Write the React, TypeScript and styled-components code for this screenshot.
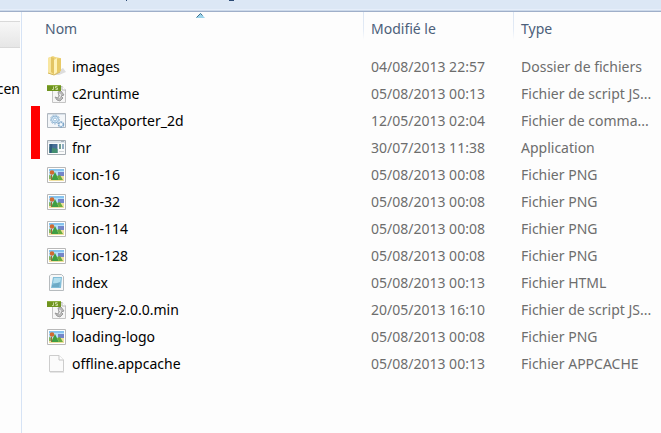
import React from "react";
import styled, { createGlobalStyle } from "styled-components";

const GlobalStyle = createGlobalStyle`
  * { box-sizing: border-box; }
  body { margin: 0; background: #fdfdfd; font-family: "Noto Sans", "Open Sans", sans-serif; font-size: 14px; overflow: hidden; }
`;

const Window = styled.div`
  display: flex;
  flex-direction: column;
  min-height: 100vh;
`;

const CommandBar = styled.header`
  height: 12px;
  flex: none;
  background: linear-gradient(#dce7f5 0 9px, #e6eefa 9px 10px, #ccd9ea 10px 11px, #9fafc9 11px);
  svg { display: block; }
`;

const Body = styled.div`
  display: flex;
  flex: 1;
`;

const Sidebar = styled.nav`
  width: 22px;
  flex: none;
  padding-top: 9px;
  border-right: 1px solid #d6e3f5;
  overflow: hidden;
`;

const SidebarHeading = styled.div`
  height: 27px;
  margin-right: 1px;
  border: 1px solid #d9d9d9;
  border-left: 0;
  border-right: 0;
  background: linear-gradient(#f7f7f7, #e6e6e6);
`;

const SidebarLink = styled.a`
  display: flex;
  justify-content: flex-end;
  margin-top: 31px;
  padding-right: 1px;
  line-height: 20px;
  color: #000;
  text-decoration: none;
`;

const Content = styled.main`
  position: relative;
  flex: 1;
  min-width: 0;
`;

const SortMark = styled.svg`
  position: absolute;
  top: 1px;
  left: 174px;
`;

const RedMark = styled.div`
  position: absolute;
  top: 94px;
  left: 9px;
  width: 9px;
  height: 53px;
  background: #f00;
`;

const FileTable = styled.table`
  width: 100%;
  table-layout: fixed;
  border-collapse: collapse;
`;

const Column = styled.col<{ $width?: number }>`
  width: ${(p) => (p.$width ? `${p.$width}px` : "auto")};
`;

const HeadCell = styled.th<{ $first?: boolean }>`
  height: 41px;
  padding: 7px 0 0 ${(p) => (p.$first ? 23 : 8)}px;
  vertical-align: top;
  text-align: left;
  font-weight: 400;
  line-height: 20px;
  color: #4c607a;
  background: ${(p) => (p.$first ? "none" : "linear-gradient(#dce6f3, #e2eaf5 60%, #fdfdfd) 0 0 / 1px 28px no-repeat")};
`;

const Cell = styled.td`
  height: 27px;
  padding: 0 0 0 8px;
  line-height: 20px;
  white-space: nowrap;
  overflow: hidden;
  color: #6d6d6d;
`;

const NameCell = styled(Cell)`
  padding-left: 25px;
  color: #000;
`;

const FileName = styled.div`
  display: flex;
  align-items: center;
  gap: 5px;
`;

const IconSvg = styled.svg`
  flex: none;
  display: block;
`;

type Kind = "folder" | "js" | "cmd" | "app" | "png" | "html" | "blank";

const glyphs: Record<Kind, React.ReactNode> = {
  folder: (
    <>
      <path d="M11 14l5-3 3 4-7 3h-4z" fill="#cfcfcf" opacity=".7" />
      <path d="M1 1l5-2 2 1 5 1v13l-6 4-6-2z" fill="#efd57c" />
      <path d="M1 1l3-1v15l3 3-6-2z" fill="#f8e6a0" />
      <path d="M4 0l3 1v16l-3-2z" fill="#e3c463" />
      <path d="M7 3l3-2v14l-3 3z" fill="#fff2b8" />
      <path d="M10 2l4-1v13l-4 2z" fill="#e8ca66" />
      <path d="M1 16l6 2 6-3" fill="none" stroke="#d4b75d" />
    </>
  ),
  js: (
    <>
      <path d="M5.500 2.500H15l3.500 3.500V18.500H5.500Z" fill="#f6f6f6" stroke="#c4c4c4" />
      <path d="M15 2v4h4" fill="#fff" stroke="#b8b8b8" />
      <path d="M11 8l3-1 3 4-3 1 2 2-3 3-3-1-2-3 3 1 1-2z" fill="#b9b9b9" stroke="#9c9c9c" />
      <path d="M12 10l2 1-2 3" fill="none" stroke="#f2f2f2" />
      <path d="M0 1h14v6H0z" fill="#6f9420" />
      <path d="M0 1h14v1H0z" fill="#8daf3d" />
      <path d="M6.500 2.500v3H5M10.500 2.500h-2v1.500h2v1.500h-2" fill="none" stroke="#dce8b8" strokeWidth=".8" />
    </>
  ),
  cmd: (
    <>
      <path d="M.5 2.500h18v14H.5z" fill="#f3f6f9" stroke="#b1b8c0" />
      <path d="M1 3h17v1H1z" fill="#d8e0e8" />
      <circle cx="8" cy="8.500" r="4.500" fill="none" stroke="#9bbbd6" strokeWidth="1" strokeDasharray="2 1" />
      <circle cx="8" cy="8.500" r="3.500" fill="#d3e7f7" stroke="#91b5d2" />
      <circle cx="8" cy="8.500" r="1.500" fill="#fff" stroke="#9dbfda" />
      <circle cx="14" cy="13.500" r="2.500" fill="#dceaf6" stroke="#7fa6c8" strokeWidth="1.500" strokeDasharray="2 .7" />
      <circle cx="14" cy="13.500" r="1" fill="#fff" />
    </>
  ),
  app: (
    <>
      <path d="M.5 2.500h18v14H.5z" fill="#fafbfb" stroke="#a5acb2" />
      <path d="M1 3h17v2H1z" fill="#dfe5ea" />
      <path d="M2.500 6h8v9h-8z" fill="#476f96" />
      <path d="M2.500 9l8 2v4h-8z" fill="#438e70" />
      <path d="M2.500 6h3l-1 9h-2z" fill="#315b7e" />
      <path d="M12 6h2v5h-2z" fill="#709c8d" />
      <path d="M15 6h2v5h-2z" fill="#92aec4" />
      <path d="M12 13.500h5" stroke="#d3d7da" />
      <path d="M14 3.500h3" stroke="#a7b4bf" />
    </>
  ),
  png: (
    <>
      <path d="M.5 2.500h18v15H.5z" fill="#fff" stroke="#b8b8b8" />
      <path d="M2 4h15v12H2z" fill="#b5e0fa" />
      <path d="M2 4h15v2H2z" fill="#86c3ee" />
      <path d="M11 7h6v4h-6z" fill="#7485c9" />
      <path d="M2 11h15v5H2z" fill="#efe0a0" />
      <path d="M2 10l3 1-1 3H2z" fill="#83b565" />
      <path d="M4 15l4-8 4 8z" fill="#3f9e43" />
      <path d="M10 11l3-1 3 5h-4z" fill="#69ad3e" />
      <path d="M4.500 10v5" stroke="#9b6a3d" />
      <circle cx="5" cy="7.500" r="2.300" fill="#d06a30" />
    </>
  ),
  html: (
    <>
      <path d="M4 1.500h10.500l2 2v14H2.500V3z" fill="#f7f8f8" stroke="#b6bbbe" />
      <path d="M6 4h9l-1 11H4z" fill="#82bdd8" />
      <path d="M7 5h7l-1 5H6z" fill="#b2deed" />
      <path d="M5 12l8-3-1 5H5z" fill="#6daac5" />
    </>
  ),
  blank: (
    <>
      <path d="M2.500 1.500H12l4.500 4.500V17.500H2.500Z" fill="#fbfbfb" stroke="#cdcdcd" />
      <path d="M12 1.500v4.500h4.500" fill="#fff" stroke="#c6c6c6" />
      <path d="M3 18.500h14" stroke="#e6e6e6" />
    </>
  ),
};

const FileIcon = ({ kind }: { kind: Kind }) => (
  <IconSvg width="20" height="20" viewBox="0 0 20 20" overflow="visible" aria-hidden="true">
    {glyphs[kind]}
  </IconSvg>
);

const files: [Kind, string, string, string][] = [
  ["folder", "images", "04/08/2013 22:57", "Dossier de fichiers"],
  ["js", "c2runtime", "05/08/2013 00:13", "Fichier de script JS..."],
  ["cmd", "EjectaXporter_2d", "12/05/2013 02:04", "Fichier de comma..."],
  ["app", "fnr", "30/07/2013 11:38", "Application"],
  ["png", "icon-16", "05/08/2013 00:08", "Fichier PNG"],
  ["png", "icon-32", "05/08/2013 00:08", "Fichier PNG"],
  ["png", "icon-114", "05/08/2013 00:08", "Fichier PNG"],
  ["png", "icon-128", "05/08/2013 00:08", "Fichier PNG"],
  ["html", "index", "05/08/2013 00:13", "Fichier HTML"],
  ["js", "jquery-2.0.0.min", "20/05/2013 16:10", "Fichier de script JS..."],
  ["png", "loading-logo", "05/08/2013 00:08", "Fichier PNG"],
  ["blank", "offline.appcache", "05/08/2013 00:13", "Fichier APPCACHE"],
];

export default function App() {
  return (
    <Window>
      <GlobalStyle />
      <CommandBar>
        <svg width="240" height="2" viewBox="0 0 240 2" aria-hidden="true">
          <path d="M126 0h1v1h-1zM229 0h5v1h-5z" fill="#2b4a75" />
        </svg>
      </CommandBar>
      <Body>
        <Sidebar>
          <SidebarHeading />
          <SidebarLink href="#">cen</SidebarLink>
        </Sidebar>
        <Content>
          <FileTable>
            <colgroup>
              <Column $width={341} />
              <Column $width={150} />
              <Column />
            </colgroup>
            <thead>
              <tr>
                <HeadCell $first>Nom</HeadCell>
                <HeadCell>Modifié le</HeadCell>
                <HeadCell>Type</HeadCell>
              </tr>
            </thead>
            <tbody>
              {files.map(([kind, name, date, type]) => (
                <tr key={name}>
                  <NameCell>
                    <FileName>
                      <FileIcon kind={kind} />
                      {name}
                    </FileName>
                  </NameCell>
                  <Cell>{date}</Cell>
                  <Cell>{type}</Cell>
                </tr>
              ))}
            </tbody>
          </FileTable>
          <SortMark width="9" height="5" viewBox="0 0 9 5" aria-hidden="true">
            <path d="M0 5l4.500-5L9 5z" fill="#9bd3ea" />
            <path d="M.5 4.500l4-4 2 2" fill="none" stroke="#3f6f8d" />
          </SortMark>
          <RedMark />
        </Content>
      </Body>
    </Window>
  );
}
